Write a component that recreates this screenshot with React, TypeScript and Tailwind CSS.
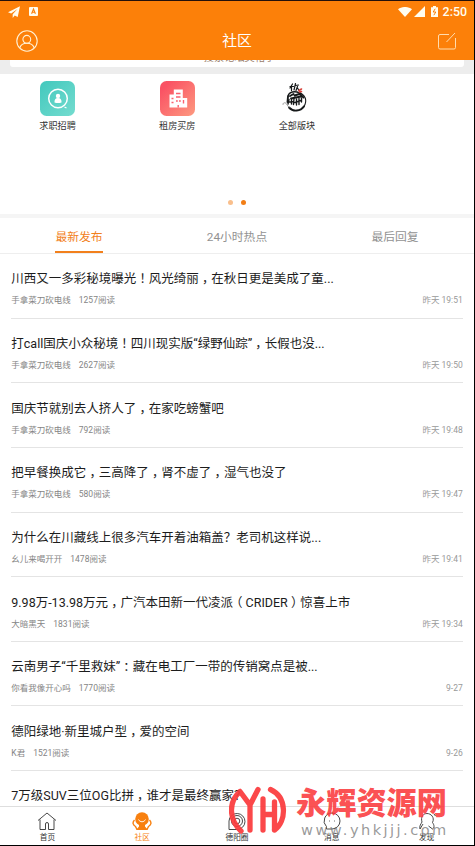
import { Fragment } from 'react';
import type { ReactNode } from 'react';

interface Post {
  title: string;
  author: string;
  reads: string;
  time: string;
}

const POSTS: Post[] = [
  { title: '川西又一多彩秘境曝光！风光绮丽，在秋日更是美成了童...', author: '手拿菜刀砍电线', reads: '1257阅读', time: '昨天 19:51' },
  { title: '打call国庆小众秘境！四川现实版“绿野仙踪”，长假也没...', author: '手拿菜刀砍电线', reads: '2627阅读', time: '昨天 19:50' },
  { title: '国庆节就别去人挤人了，在家吃螃蟹吧', author: '手拿菜刀砍电线', reads: '792阅读', time: '昨天 19:48' },
  { title: '把早餐换成它，三高降了，肾不虚了，湿气也没了', author: '手拿菜刀砍电线', reads: '580阅读', time: '昨天 19:47' },
  { title: '为什么在川藏线上很多汽车开着油箱盖？老司机这样说...', author: '幺儿来喝开开', reads: '1478阅读', time: '昨天 19:41' },
  { title: '9.98万-13.98万元，广汽本田新一代凌派（CRIDER）惊喜上市', author: '大暗黑天', reads: '1831阅读', time: '昨天 19:34' },
  { title: '云南男子“千里救妹”：藏在电工厂一带的传销窝点是被...', author: '你看我像开心吗', reads: '1770阅读', time: '9-27' },
  { title: '德阳绿地·新里城户型，爱的空间', author: 'K君', reads: '1521阅读', time: '9-26' },
  { title: '7万级SUV三位OG比拼，谁才是最终赢家？', author: '', reads: '', time: '' },
];

const TABS = ['最新发布', '24小时热点', '最后回复'];

// 全角标点取半宽字形，两侧补空，使其在字框内居中
function Title({ text }: { text: string }) {
  return (
    <h3 className="whitespace-nowrap text-[12.500px] leading-[18px] text-[#1c1c1c]">
      {text.split(/([，！：（）])/).map((part, i) =>
        i % 2 === 1 ? (
          <span key={i} className="mx-[0.25em] [font-feature-settings:'halt']">{part}</span>
        ) : (
          <Fragment key={i}>{part}</Fragment>
        ),
      )}
    </h3>
  );
}

function StatusBar() {
  return (
    <div className="flex h-[21px] items-center justify-between pr-[7px] pl-[8px] text-[#fffdf0]">
      <div className="flex items-center gap-[9px]">
        <svg className="h-[12px] w-[12px]" viewBox="0 0 12 12" fill="currentColor">
          <path d="M12 .3 0 6.2l3.2 1.4L9.5 3 4.7 8.2V12l2-2.5 3 1.500z" />
        </svg>
        <svg className="h-[9px] w-[9px]" viewBox="0 0 9 9">
          <rect width="9" height="9" rx="1" fill="currentColor" />
          <path d="M2.600 6.800 4.500 2l1.900 4.800M3.300 5.200h2.400" fill="none" stroke="#fc8009" strokeWidth="1.100" />
        </svg>
      </div>
      <div className="flex items-center">
        <svg className="h-[10px] w-[14px]" viewBox="0 0 14 10" fill="currentColor">
          <path d="M0 2.300C4-.8 10-.8 14 2.300L7 10z" />
        </svg>
        <svg className="ml-[2px] h-[11px] w-[11px]" viewBox="0 0 11 11" fill="currentColor">
          <path d="M11 0v11H0z" />
        </svg>
        <svg className="ml-[6px] h-[11px] w-[7px]" viewBox="0 0 7 11">
          <path d="M2 0h3v1.200h2V11H0V1.200h2z" fill="currentColor" />
          <path d="M4.200 2.800 2.200 6h2.600L2.800 9.200" fill="none" stroke="#fc8009" />
        </svg>
        <span className="ml-[5px] pt-px text-[12.400px] leading-none font-medium">2:50</span>
      </div>
    </div>
  );
}

function Header() {
  return (
    <header className="h-[60px] shrink-0 border-t border-[#24100a] bg-[#fc8009]">
      <StatusBar />
      <div className="flex h-[38px] items-center justify-between pr-[18px] pl-[16px]">
        <svg className="h-[22px] w-[22px]" viewBox="0 0 22 22" fill="none" stroke="#fff1d6" strokeWidth="1.100">
          <circle cx="11" cy="11" r="10.200" />
          <circle cx="10.800" cy="9.300" r="3.900" />
          <path d="M3.700 18c1-3 3.800-4.700 7.200-4.700s6.300 1.700 7.300 4.700" />
        </svg>
        <h1 className="pr-[1px] text-[14.800px] leading-none text-white">社区</h1>
        <svg className="h-[18px] w-[19px]" viewBox="0 0 19 18" fill="none" stroke="#ffdcae" strokeWidth="1">
          <path d="M12 2.500H3A1.500 1.500 0 0 0 1.500 4v11.500A1.500 1.500 0 0 0 3 17h14a1.500 1.500 0 0 0 1.500-1.500V6M9.500 10 18 1" />
        </svg>
      </div>
    </header>
  );
}

function JobIcon() {
  return (
    <svg className="h-[35px] w-[35px]" viewBox="0 0 35 35">
      <defs>
        <linearGradient id="job" x1="0" y1="0" x2="1" y2="1">
          <stop stopColor="#42c8bd" />
          <stop offset="1" stopColor="#74dccf" />
        </linearGradient>
      </defs>
      <rect width="35" height="35" rx="6.500" fill="url(#job)" />
      <circle cx="18" cy="17.500" r="9.300" fill="none" stroke="#fff" strokeWidth="1.500" />
      <circle cx="18" cy="14.900" r="2.200" fill="#fff" />
      <path d="M14.500 21.500c-.2-2.500.8-4.500 3.500-4.500s3.700 2 3.500 4.500q-3.500 1-7 0z" fill="#fff" />
      <path d="m24.500 26 2 1" stroke="#fff" strokeWidth="1.200" />
    </svg>
  );
}

function HouseIcon() {
  return (
    <svg className="h-[35px] w-[35px]" viewBox="0 0 35 35">
      <defs>
        <linearGradient id="house" x1="0" y1="0" x2="1" y2="1">
          <stop offset=".15" stopColor="#fa5264" />
          <stop offset="1" stopColor="#fd9a80" />
        </linearGradient>
      </defs>
      <rect width="35" height="35" rx="6.500" fill="url(#house)" />
      <path d="M9.500 26.500v-13h4.300V8.500h9v8.500h4.400v9.500z" fill="#fff" />
      <path d="M16 12.500h4.500M16 16h4.500M11.500 17.500h2M16 20h1.800M19 20h1.800M11.500 21.500h2M23.500 19v3.500M18.200 24v2.500" stroke="#fa6270" strokeWidth="1.400" />
    </svg>
  );
}

function ForumIcon() {
  return (
    <svg className="h-[35px] w-[35px]" viewBox="0 0 35 35" fill="none" stroke="#16191a" strokeLinecap="round">
      <path d="m13.500 3-2.500 4M12.500 5.500V9.500M11 5.500h3.500M16.500 2.500 15 9M16.500 4.500l3-.5M18.500 5.500 17 9.500M18.500 7l1.500 2.500" strokeWidth="1.200" />
      <path d="M9 15c1-3.500 5-4.500 9-4l4 1.500" strokeWidth="1.500" />
      <path d="M9 15.500 8.500 21M11 15l3.500-2M15.500 14.500l5-1.500M12 17.500l10-2M21 13l3.500 3.500" strokeWidth="1.900" />
      <path d="M10 18.500 9 23M12.500 18.500V23M15 17.500l-.5 6M17.500 18v6M20 17.500v6M9.500 21l5-.5M16 21.500l6-2M22.500 17v4" strokeWidth="1.400" />
      <path d="M21 12c7 3 7.500 11 2 15" strokeWidth="1.100" />
      <path d="M25 25.500c-3.500 5-11 5.500-15 1" strokeWidth="1.900" />
      <path d="M10 26.500 7.500 23c-1-2-4-1.500-3.500.5" strokeWidth=".7" stroke="#777" />
      <path d="m20 9.500 2.500-1.500M20.500 11l2-.5" stroke="#d8433c" strokeWidth="1.600" />
    </svg>
  );
}

function Entry({ label, children }: { label: string; children: ReactNode }) {
  return (
    <div className="flex w-[119.700px] flex-col items-center">
      {children}
      <span className="mt-[3px] text-[9.100px] leading-[14px] text-[#333]">{label}</span>
    </div>
  );
}

function PostRow({ post }: { post: Post }) {
  return (
    <li className="h-[64.650px] shrink-0 border-b border-[#e4e4e4] pt-[16.300px]">
      <Title text={post.title} />
      <div className="mt-[6.200px] flex items-center text-[8.500px] leading-[12px] text-[#858585]">
        <span>{post.author}</span>
        <span className="ml-[8px]">{post.reads}</span>
        <span className="ml-auto text-[#999]">{post.time}</span>
      </div>
    </li>
  );
}

function NavItem({ label, active, children }: { label: string; active?: boolean; children: ReactNode }) {
  return (
    <div className={`flex flex-1 flex-col items-center pt-[4px] ${active ? 'text-[#f8800f]' : 'text-[#333]'}`}>
      <svg className="h-[20px] w-[20px]" viewBox="0 0 20 20" fill="none" stroke="currentColor" strokeWidth=".9">
        {children}
      </svg>
      <span className="mt-[1.500px] text-[7.700px] leading-[10px]">{label}</span>
    </div>
  );
}

function BottomNav() {
  return (
    <nav className="flex h-[39px] shrink-0 border-t border-[#dedede] bg-white">
      <NavItem label="首页">
        <path d="M1 9.500 10 2l9 7.500M3 8.500V18.500h5.500V13a1.500 1.500 0 0 1 3 0v5.500H17V8.500" />
      </NavItem>
      <NavItem label="社区" active>
        <circle cx="10" cy="8" r="6.800" fill="currentColor" stroke="none" />
        <path d="M7 13h6v2.500l3 3.500H4l3-3.500z" fill="currentColor" stroke="none" />
        <path d="M2.500 9C0 11.500 1 14 3.500 15.500L5 18.500M17.500 9c2.500 2.500 1.500 5-1 6.500L15 18.500" strokeWidth="1.400" />
        <path d="M6.500 8.500c1.500 3 5.500 3 7 0" stroke="#fff" />
      </NavItem>
      <NavItem label="德阳圈">
        <path d="M2 18.500V10a8 8 0 1 1 8 8.500z" />
        <circle cx="10" cy="10" r="5.500" />
        <circle cx="10" cy="10" r="2.800" />
      </NavItem>
      <NavItem label="消息">
        <path d="M10 2a8 8 0 0 1 0 16H4.500v-2.300A8 8 0 0 1 10 2M7 10h.8M12 10h.8" />
      </NavItem>
      <NavItem label="发现">
        <path d="M3 18c-1-3 1-5 2-7C3.500 6 6 2.500 10 2.500s8 4 5.500 9c2 3 2 5 0 6.500l-4-3M6 13l-3 5M17 3l1.500 2" />
      </NavItem>
    </nav>
  );
}

function Watermark() {
  return (
    <div className="pointer-events-none absolute bottom-0 left-[229px] flex h-[60px] w-[222px]">
      <svg className="h-[60px] w-[58px] shrink-0" viewBox="0 0 58 60" fill="none" stroke="#fb3a3c" strokeOpacity=".93" strokeLinecap="round" strokeLinejoin="round">
        <path d="M11 6.500C-1 17 0 35 12 46M11 6.500 21 20 29 4.500M21 20V45M34 14v31M34 29.500H45.500M45.500 17V45M41.500 4.500C58 12 58 36 45.500 45" strokeWidth="5.300" />
      </svg>
      <div className="ml-[9px] pt-[1px]">
        <div className="whitespace-nowrap text-[30.200px] leading-[36px] font-black text-[#fb3a3c]/90">永辉资源网</div>
        <div className="ml-[5px] whitespace-nowrap font-['DejaVu_Sans',sans-serif] text-[14.600px] leading-[16px] tracking-[2.450px] text-[#777]/75">www.yhkjjj.com</div>
      </div>
    </div>
  );
}

export default function App() {
  return (
    <div className="relative flex h-[846px] w-[475px] flex-col overflow-hidden border-r border-b border-black bg-white font-['Roboto','Noto_Sans_CJK_SC',sans-serif]">
      <Header />
      <div className="h-[14px] shrink-0 bg-[#ededed] px-[10px]">
        <div className="flex h-[7px] items-end justify-center overflow-hidden rounded-b-[3px] bg-white">
          <span className="mb-[3.500px] pl-[5px] text-[10.200px] leading-[12px] text-[#997d6b]">搜索论坛类帖子</span>
        </div>
      </div>

      {/* 版块入口 */}
      <section className="flex h-[140px] shrink-0 flex-col justify-between pt-[7px] pb-[9px]">
        <div className="-ml-[2.300px] flex">
          <Entry label="求职招聘"><JobIcon /></Entry>
          <Entry label="租房买房"><HouseIcon /></Entry>
          <Entry label="全部版块"><ForumIcon /></Entry>
        </div>
        <div className="flex justify-center gap-[8px]">
          <i className="h-[5px] w-[5px] rounded-full bg-[#f9bf8c]" />
          <i className="h-[5px] w-[5px] rounded-full bg-[#f27e16]" />
        </div>
      </section>
      <div className="h-[4px] shrink-0 bg-[#f5f5f5]" />

      {/* 标签栏 */}
      <div className="flex h-[36px] shrink-0 border-b border-[#eee] text-[11.800px]">
        {TABS.map((tab, i) => (
          <div key={tab} className="flex flex-1 justify-center">
            <span className={i === 0 ? 'border-b-2 border-[#f2801c] pt-[10px] leading-[18px] text-[#f2801c]' : 'pt-[10px] leading-[18px] text-[#929292]'}>
              {tab}
            </span>
          </div>
        ))}
      </div>

      <ul className="flex min-h-0 flex-1 flex-col overflow-hidden px-[11.300px]">
        {POSTS.map((post) => <PostRow key={post.title} post={post} />)}
      </ul>

      <BottomNav />
      <Watermark />
    </div>
  );
}
